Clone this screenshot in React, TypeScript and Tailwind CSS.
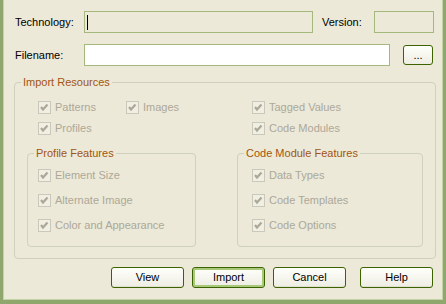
import React from "react";

function Check({ label }: { label: string }) {
  return (
    <div className="flex items-center h-[13px]">
      <span className="w-[13px] h-[13px] border border-[#CAC8BB] bg-[#F1EFE2] flex items-center justify-center shrink-0">
        <svg width="11" height="11" viewBox="0 0 11 11">
          <polyline points="2,5 4,7.5 8.5,2.5" fill="none" stroke="#ACA899" strokeWidth="2.2" />
        </svg>
      </span>
      <span className="ml-[4px] text-[#ACA899] leading-[13px]">{label}</span>
    </div>
  );
}

function Group({
  title,
  className,
  inner,
  children,
}: {
  title: string;
  className?: string;
  inner?: string;
  children: React.ReactNode;
}) {
  return (
    <fieldset className={"border border-[#D0D0BF] rounded-[4px] p-0 " + (className ?? "")}>
      <legend className="ml-[6px] px-[2px] text-[#A3550F] leading-[13px]">{title}</legend>
      <div className={inner}>{children}</div>
    </fieldset>
  );
}

function Btn({ label, def, className }: { label: string; def?: boolean; className?: string }) {
  return (
    <button
      className={
        "w-[73px] h-[21px] rounded-[3px] border border-[#3D6200] bg-gradient-to-b from-[#FFFFFB] to-[#EEEDE3] text-black leading-[19px] " +
        (def ? "shadow-[inset_0_0_0_2px_#A9C97A] " : "shadow-[inset_0_-1px_0_#E0DFD2] ") +
        (className ?? "")
      }
    >
      {label}
    </button>
  );
}

export default function App() {
  return (
    <div className="w-[446px] h-[304px] bg-[#ECE9D8] border-l-[3px] border-r-[3px] border-b-[4px] border-[#8FA76C] shadow-[inset_1px_0_0_#C3D3A5,inset_-1px_0_0_#C3D3A5,inset_0_-1px_0_#C3D3A5] font-['Liberation_Sans',Arial,sans-serif] text-[11px] text-black flex flex-col">
      <div className="mt-[11px] flex items-center h-[22px]">
        <span className="w-[81px] pl-[12px]">Technology:</span>
        <div className="w-[229px] h-[22px] border border-[#A5B97F] bg-[#ECE9D8] flex items-center pl-[2px]">
          <span className="w-px h-[15px] bg-black" />
        </div>
        <span className="ml-[9px] w-[52px]">Version:</span>
        <div className="w-[60px] h-[22px] border border-[#A5B97F] bg-[#ECE9D8]" />
      </div>
      <div className="mt-[11px] flex items-center h-[22px]">
        <span className="w-[81px] pl-[12px]">Filename:</span>
        <div className="w-[306px] h-[22px] border border-[#A5B97F] bg-white" />
        <button className="ml-[13px] w-[30px] h-[20px] rounded-[3px] border border-[#3D6200] bg-gradient-to-b from-[#FFFFFB] to-[#EEEDE3] leading-[14px]">
          ...
        </button>
      </div>
      <Group
        title="Import Resources"
        className="mt-[10px] ml-[11px] w-[421px]"
        inner="pl-[12px] pr-[12px] pb-[11px] pt-[12px]"
      >
        <div className="grid grid-cols-[169px_186px] gap-x-[41px]">
          <div className="pl-[11px] flex flex-col gap-[8px]">
            <div className="flex">
              <div className="w-[88px]">
                <Check label="Patterns" />
              </div>
              <Check label="Images" />
            </div>
            <Check label="Profiles" />
          </div>
          <div className="pl-[15px] flex flex-col gap-[8px]">
            <Check label="Tagged Values" />
            <Check label="Code Modules" />
          </div>
          <Group title="Profile Features" className="mt-[12px]" inner="pl-[10px] pt-[9px] pb-[14px]">
            <div className="flex flex-col gap-[12px]">
              <Check label="Element Size" />
              <Check label="Alternate Image" />
              <Check label="Color and Appearance" />
            </div>
          </Group>
          <Group title="Code Module Features" className="mt-[12px]" inner="pl-[14px] pt-[9px] pb-[14px]">
            <div className="flex flex-col gap-[12px]">
              <Check label="Data Types" />
              <Check label="Code Templates" />
              <Check label="Code Options" />
            </div>
          </Group>
        </div>
      </Group>
      <div className="mt-[8px] flex pl-[108px] gap-[8px]">
        <Btn label="View" />
        <Btn label="Import" def />
        <Btn label="Cancel" />
        <Btn label="Help" className="ml-[6px]" />
      </div>
    </div>
  );
}
